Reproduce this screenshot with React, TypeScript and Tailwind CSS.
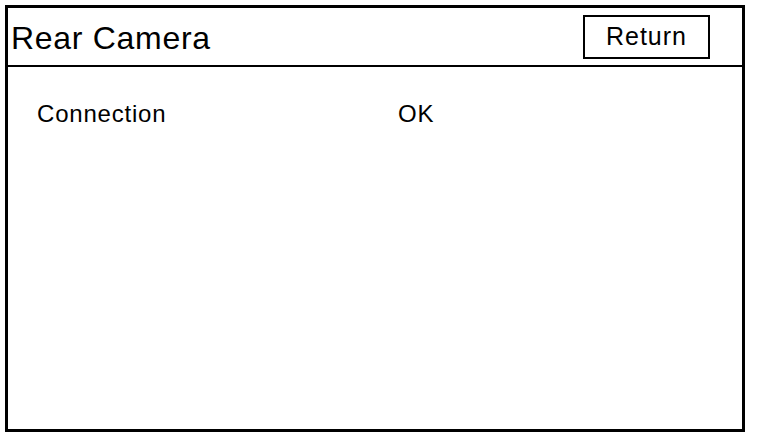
export default function App() {
  const font = { fontFamily: '"Liberation Sans", Arial, sans-serif' };
  return (
    <div className="w-[768px] h-[436px] bg-white pt-[5px] pl-[5px]" style={font}>
      <div className="w-[740px] h-[427px] border-[3px] border-black flex flex-col">
        <div className="h-[59px] border-b-2 border-black flex items-center justify-between pl-[3px] pr-[32px]">
          <span className="text-[32px] tracking-[0.7px] text-black leading-none mt-[3px]">Rear Camera</span>
          <div className="w-[127px] h-[44px] border-2 border-black flex items-center justify-center">
            <span className="text-[25px] tracking-[1px] text-black leading-none">Return</span>
          </div>
        </div>
        <div className="flex pl-[29px] pt-[35px] text-[24px] tracking-[0.8px] text-black leading-none">
          <span className="w-[361px]">Connection</span>
          <span>OK</span>
        </div>
      </div>
    </div>
  );
}
